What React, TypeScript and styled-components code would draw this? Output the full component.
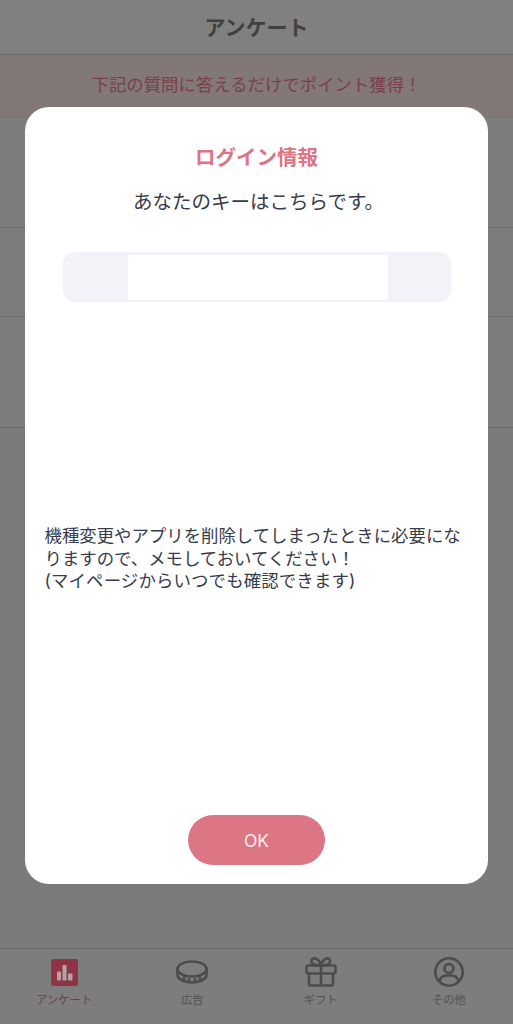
import React from "react";
import styled, { createGlobalStyle } from "styled-components";

const Global = createGlobalStyle`
  html, body { margin: 0; padding: 0; background: #7b7b7e; }
  body { font-family: "Inter", "Noto Sans CJK JP", sans-serif; }
`;
const Page = styled.div`
  position: relative; width: 513px; height: 1024px; overflow: hidden;
  display: flex; flex-direction: column; background: #7b7b7e;
`;
const Header = styled.header`
  height: 54px; display: flex; align-items: center; justify-content: center;
  background: #808080; border-bottom: 1px solid #6a6a6a;
  font-size: 21px; font-weight: 600; color: #404040;
`;
const HeaderText = styled.span`margin-top: -3px;`;
const Banner = styled.div`
  height: 61px; display: flex; align-items: center; justify-content: center;
  background: #827878; border-bottom: 1px solid #757575;
  font-size: 17.4px; color: #7a3f4a;
`;
const BannerText = styled.span`margin-top: -4px;`;
const Row = styled.div<{ $h: number }>`
  height: ${p => p.$h}px; background: #7d7d7d; border-bottom: 1px solid #6d6d6d;
`;
const Spacer = styled.div`flex: 1;`;
const Nav = styled.nav`
  height: 75px; display: grid; grid-template-columns: repeat(4, 1fr);
  background: #7d7d7d; border-top: 1px solid #6a6a6a;
`;
const NavItem = styled.div<{ $active?: boolean }>`
  display: flex; flex-direction: column; align-items: center; padding-top: 7px;
  font-size: 11.4px; color: ${p => (p.$active ? "#743a46" : "#535353")};
`;
const IconWrap = styled.div`height: 32px; margin-bottom: 3px; display: flex; align-items: center;`;
const Modal = styled.section`
  position: absolute; left: 25px; top: 107px; width: 463px; height: 777px;
  background: #fff; border-radius: 24px; box-sizing: border-box;
  display: flex; flex-direction: column; align-items: center; padding-top: 36px;
`;
const Title = styled.h2`
  margin: 1px 0 0; font-size: 20.5px; line-height: 28px; font-weight: 600; color: #dc7483;
`;
const Lead = styled.p`
  margin: 16px 0 0 4px; font-size: 19.5px; line-height: 28px; color: #363c4c;
`;
const KeyField = styled.div`
  margin-top: 36px; width: 388px; height: 50px; border-radius: 12px; background: #f2f2f9;
  display: flex; justify-content: center; align-items: center; padding-left: 2px; box-sizing: border-box;
`;
const KeyValue = styled.div`width: 260px; height: 45px; background: #fff;`;
const Note = styled.p`
  margin: 223px 0 0; width: 424px; font-size: 17.4px; line-height: 22.5px; color: #363c4c;
`;
const NoteAside = styled.span`letter-spacing: 0.16px;`;
const Ok = styled.button`
  margin-top: auto; margin-bottom: 19px; width: 137px; height: 50px; border: 0; border-radius: 25px;
  background: #dd7684; color: #fbeef0; font: 400 17.5px "Inter", sans-serif;
`;

const stroke = { fill: "none", stroke: "#4c4c4c", strokeWidth: 2.6, strokeLinecap: "round" as const, strokeLinejoin: "round" as const };

export default function App() {
  return (
    <Page>
      <Global />
      <Header><HeaderText>アンケート</HeaderText></Header>
      <Banner><BannerText>下記の質問に答えるだけでポイント獲得！</BannerText></Banner>
      <Row $h={110} />
      <Row $h={88} />
      <Row $h={110} />
      <Spacer />
      <Nav>
        <NavItem $active>
          <IconWrap>
            <svg width="27" height="27" viewBox="0 0 27 27">
              <rect width="27" height="27" rx="2" fill="#8f3444" />
              <rect x="6" y="12.500" width="4" height="9" rx="1" fill="#b5a3a3" />
              <rect x="11.500" y="6" width="4" height="15.500" rx="1" fill="#b5a3a3" />
              <rect x="17" y="14.500" width="4.500" height="7" rx="1" fill="#b5a3a3" />
            </svg>
          </IconWrap>
          アンケート
        </NavItem>
        <NavItem>
          <IconWrap>
            <svg width="32" height="24" viewBox="0 0 32 24" {...stroke}>
              <ellipse cx="16" cy="9" rx="14.500" ry="7.500" />
              <path d="M1.500 9v6c0 4 6.500 7.500 14.500 7.500S30.500 19 30.500 15V9" />
              <path d="M8 20v-3M13 22v-3M19 22v-3M24 20v-3" />
            </svg>
          </IconWrap>
          広告
        </NavItem>
        <NavItem>
          <IconWrap>
            <svg width="32" height="30" viewBox="0 0 32 30" {...stroke}>
              <rect x="1.500" y="8.500" width="29" height="8" rx="1.500" />
              <path d="M4 16.500V27a1.500 1.500 0 0 0 1.500 1.500h21A1.500 1.500 0 0 0 28 27V16.500M16 8.500v20M16 8.500C12 8.500 7 8.500 6.500 5S10 0 13 3s3 5.500 3 5.500 0-2.500 3-5.500 6.500-1.500 6 2-5.500 3.500-9.500 3.500" />
            </svg>
          </IconWrap>
          ギフト
        </NavItem>
        <NavItem>
          <IconWrap>
            <svg width="30" height="30" viewBox="0 0 30 30" {...stroke}>
              <circle cx="15" cy="15" r="13.700" />
              <circle cx="15" cy="11.500" r="4.500" />
              <path d="M5.500 24c1-4 4-5.500 7-5.500h5c3 0 6 1.500 7 5.500" />
            </svg>
          </IconWrap>
          その他
        </NavItem>
      </Nav>
      <Modal>
        <Title>ログイン情報</Title>
        <Lead>あなたのキーはこちらです。</Lead>
        <KeyField><KeyValue /></KeyField>
        <Note>
          機種変更やアプリを削除してしまったときに必要になりますので、メモしておいてください！<br />
          <NoteAside>(マイページからいつでも確認できます)</NoteAside>
        </Note>
        <Ok>OK</Ok>
      </Modal>
    </Page>
  );
}
